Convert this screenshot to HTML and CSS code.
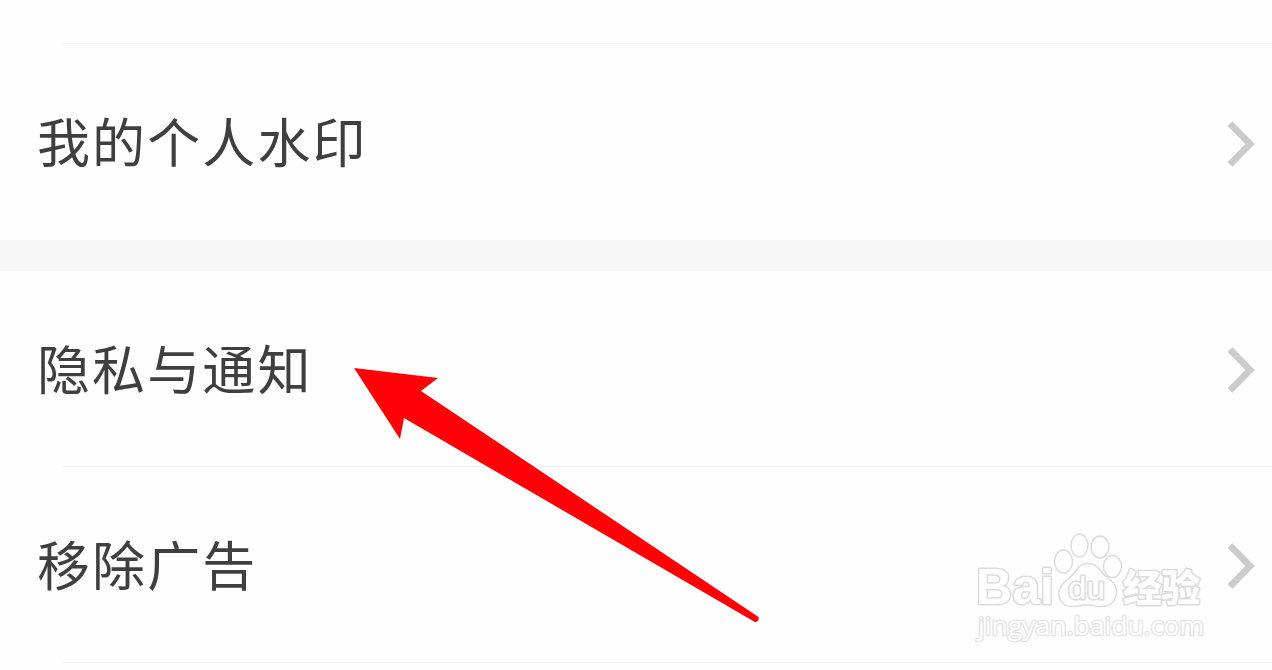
FILE: index.html
```html
<!DOCTYPE html>
<html lang="zh-CN">
<head>
    <meta charset="UTF-8">
    <meta name="viewport" content="width=device-width, initial-scale=1.0">
    <title>设置</title>
    <link rel="stylesheet" href="styles.css">
</head>
<body>
    <div class="page">
        <div class="group group-first">
            <div class="row">
                <span class="label">我的个人水印</span>
                <svg class="chevron" viewBox="0 0 30 48"><path d="M4 3.5 L24 24 L4 44.5"/></svg>
            </div>
        </div>
        <div class="group">
            <div class="row">
                <span class="label">隐私与通知</span>
                <svg class="chevron" viewBox="0 0 30 48"><path d="M4 3.5 L24 24 L4 44.5"/></svg>
            </div>
            <div class="divider"></div>
            <div class="row">
                <span class="label">移除广告</span>
                <svg class="chevron" viewBox="0 0 30 48"><path d="M4 3.5 L24 24 L4 44.5"/></svg>
            </div>
            <div class="divider"></div>
        </div>

        <svg class="arrow" viewBox="0 0 410 260">
            <path d="M4 18 L88 28 L71 41 L407 266 A3 3 0 0 1 404 271.5 L54 68 L50 89 Z"/>
        </svg>

        <svg class="watermark" viewBox="0 0 240 116">
            <text class="brand" x="4" y="74" textLength="78" lengthAdjust="spacingAndGlyphs">Bai</text>
            <ellipse cx="91.500" cy="31.500" rx="9" ry="11.500"/>
            <ellipse cx="107.500" cy="15.500" rx="8.500" ry="11.500"/>
            <ellipse cx="128" cy="17" rx="9" ry="11"/>
            <ellipse cx="140.500" cy="36.500" rx="9" ry="11"/>
            <path d="M115.500 33.500 C105 33.500 105 43 96 49 C87 56 85 62 88 69 C92 78 101 77 106 76 Q115 74 124 76 C135 78 141 75 144 66 C146 57 142 53 136 48 C127 42 127 33.500 115.500 33.500 Z"/>
            <text class="du" x="96" y="69" textLength="37" lengthAdjust="spacingAndGlyphs">du</text>
            <text class="cn" x="151" y="72" textLength="77" lengthAdjust="spacingAndGlyphs">经验</text>
            <text class="url" x="6" y="105" textLength="226" lengthAdjust="spacingAndGlyphs">jingyan.baidu.com</text>
        </svg>
    </div>
</body>
</html>
```
FILE: styles.css
```css
body {
    margin: 0;
    background-color: #f7f7f7;
    font-family: "Noto Sans CJK SC", sans-serif;
}
.page {
    position: relative;
    height: 670px;
    overflow: hidden;
    display: flex;
    flex-direction: column;
    gap: 31px;
}
.group {
    background: #fefefe;
}
.group:last-of-type {
    flex: 1;
}
.group-first {
    padding-top: 43px;
}
.group-first::before {
    content: "";
    display: block;
    height: 1px;
    margin-left: 63px;
    background: #f1f1f1;
}
.row {
    display: flex;
    align-items: center;
    justify-content: space-between;
    height: 195px;
    padding: 0 16px 0 37px;
}
.group-first .row {
    height: 196px;
}
.label {
    margin-bottom: 4px;
    font-size: 53px;
    line-height: 78px;
    letter-spacing: 2.1px;
    font-weight: 400;
    color: #3f3f3f;
}
.chevron {
    width: 30px;
    height: 48px;
    margin-top: 3px;
    fill: none;
    stroke: #cbcbcb;
    stroke-width: 6.8;
}
.divider {
    height: 1px;
    margin-left: 63px;
    background: #f1f1f1;
}
.arrow {
    position: absolute;
    left: 350px;
    top: 350px;
    width: 410px;
    height: 260px;
    overflow: visible;
    fill: #ff0006;
}
.watermark {
    position: absolute;
    left: 972px;
    top: 530px;
    width: 240px;
    height: 116px;
    fill: #fefefe;
    stroke: #dcdcdc;
    stroke-width: 1.5;
}
.watermark text {
    paint-order: stroke;
    stroke-linejoin: round;
}
.brand {
    font: bold 50px "Liberation Sans", sans-serif;
    stroke-width: 3;
}
.du {
    font: 31px "Liberation Sans", sans-serif;
    stroke-width: 3;
}
.cn {
    font: 900 37px "Noto Sans CJK SC", sans-serif;
    stroke-width: 3;
}
.url {
    font: 25px "Open Sans", sans-serif;
    stroke: #e4e4e4;
    stroke-width: 2.5;
}
```
